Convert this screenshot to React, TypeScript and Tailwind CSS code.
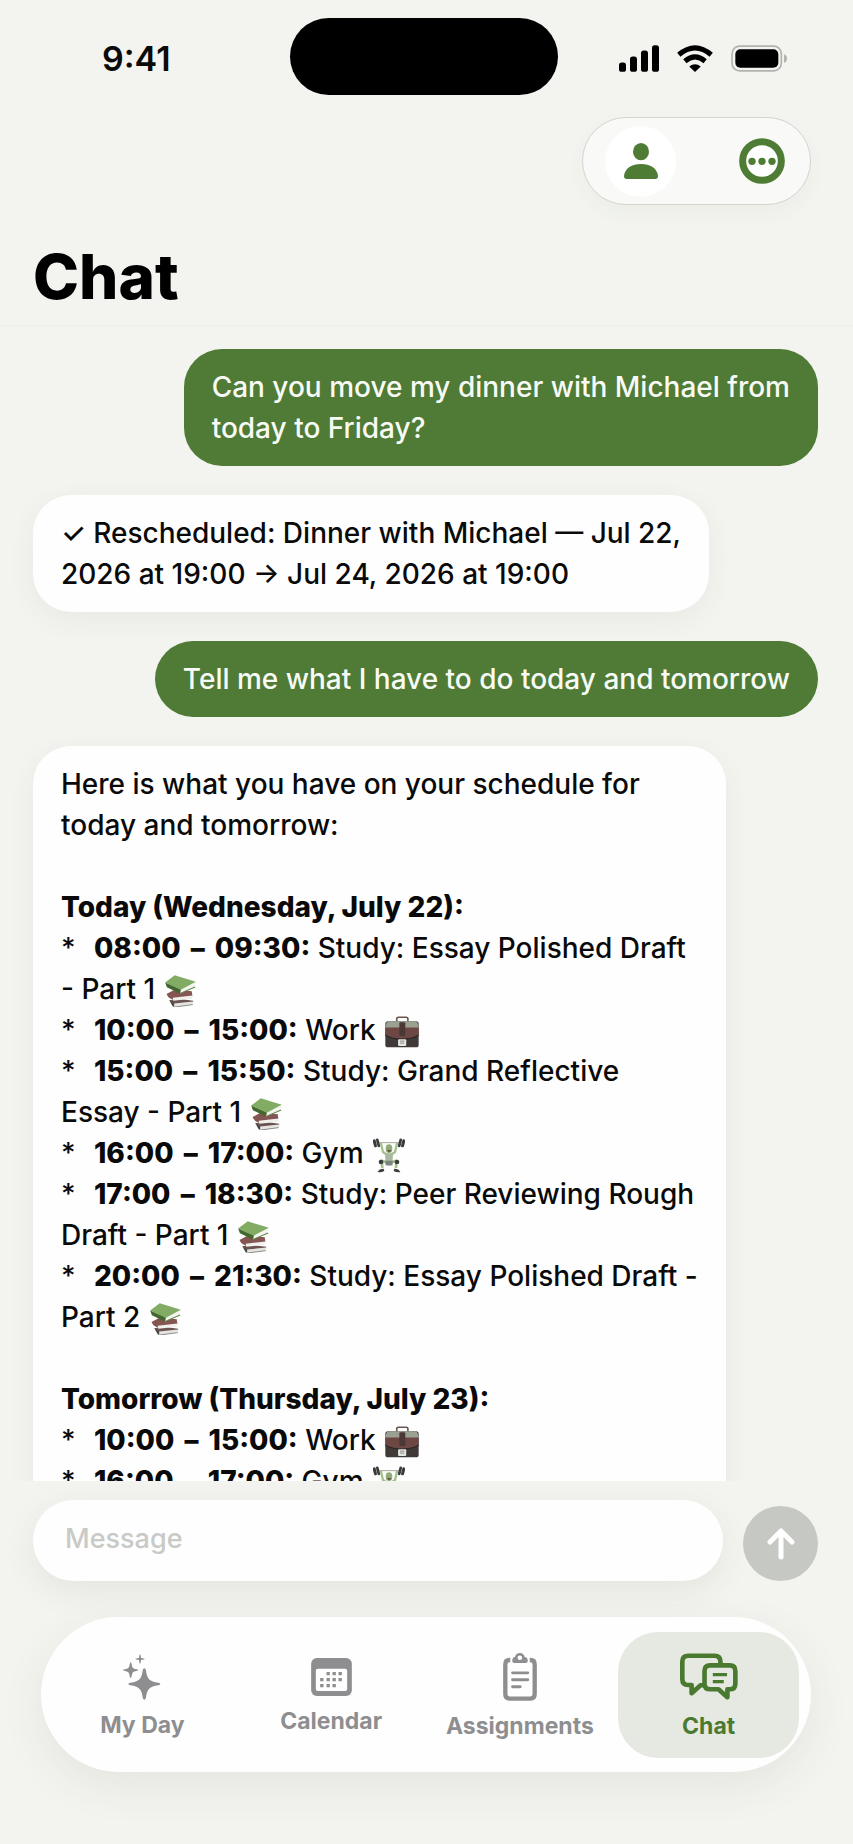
import React from "react";

const StatusBar = () => {
  return (
    <div className="grid grid-cols-[1fr_268px_1fr] items-center pt-[18px] pr-[5px]">
      <div className="pt-1 pl-[102px] text-[34px] leading-[40px] font-semibold">
        9:41
      </div>
      <div className="h-[77px] rounded-full bg-black"></div>
      <div className="flex items-center justify-end gap-[18px] pt-1 pr-[61px]">
        <svg className="h-[27px] w-10" viewBox="0 0 120 80">
          <rect x="0" y="52" width="21" height="28" rx="8" />
          <rect x="33" y="34" width="21" height="46" rx="8" />
          <rect x="66" y="16" width="21" height="64" rx="8" />
          <rect x="99" y="0" width="21" height="80" rx="8" />
        </svg>
        <svg className="h-[27px] w-9" viewBox="0 0 106 80">
          <g fill="none" stroke="#000" strokeWidth="15">
            <path d="M5 29 Q53 -12 101 29" />
            <path d="M23 48 Q53 23 83 48" />
          </g>
          <path d="M53 80 L36 64 Q53 50 70 64 Z" />
        </svg>
        <svg className="h-[27px] w-14" viewBox="0 0 168 80">
          <rect
            x="3"
            y="3"
            width="148"
            height="74"
            rx="23"
            fill="none"
            stroke="#b2b3b0"
            strokeWidth="5"
          />
          <rect x="13" y="12" width="129" height="56" rx="15" />
          <path d="M159 27 Q168 30 168 40 Q168 50 159 53 Z" fill="#b2b3b0" />
        </svg>
      </div>
    </div>
  );
};

const HeaderActions = () => {
  return (
    <div className="flex justify-end pt-[22px] pr-[42px]">
      <div className="flex h-[88px] w-[229px] items-center justify-between rounded-full border border-[#d3d4d0] bg-[#f9faf7] pr-[25px] pl-[22px] shadow-[0_8px_20px_rgba(60,70,50,0.04)]">
        <button
          aria-label="Profile"
          className="flex size-[71px] items-center justify-center rounded-full bg-white"
        >
          <svg className="h-9 w-[34px]" viewBox="0 0 102 108" fill="#4f7c35">
            <ellipse cx="51" cy="26" rx="24" ry="26" />
            <path d="M8 108 Q0 108 0 99 C2 76 24 63 51 63 C78 63 100 76 102 99 Q102 108 94 108 Z" />
          </svg>
        </button>
        <button aria-label="More">
          <svg className="size-[46px]" viewBox="0 0 138 138">
            <circle
              cx="69"
              cy="69"
              r="58"
              fill="#fff"
              stroke="#4f7c35"
              strokeWidth="21"
            />
            <g fill="#4f7c35">
              <circle cx="39" cy="70" r="11" />
              <circle cx="69" cy="70" r="11" />
              <circle cx="99" cy="70" r="11" />
            </g>
          </svg>
        </button>
      </div>
    </div>
  );
};

const Books = () => (
  <svg
    role="img"
    aria-label="books"
    className="ml-0.5 inline-block h-8 w-[31px] align-middle"
    viewBox="0 0 90 94"
  >
    <path d="M12 74 L40 70 L82 76 L82 80 L26 88 Z" fill="#6b5351" />
    <path d="M12 74 L26 84 L28 94 L22 92 Z" fill="#454844" />
    <path d="M26 84 L82 78 L80 87 L28 94 Z" fill="#e6e5e1" />
    <path d="M28 94 L81 87" stroke="#5a5c58" strokeWidth="2" />
    <path d="M4 56 L30 42 L78 48 L80 62 L22 72 Q8 68 4 56 Z" fill="#845552" />
    <path d="M22 67 L80 60 L78 70 L24 76 Z" fill="#f1f0ec" />
    <path d="M0 22 L5 36 L43 54 L46 42 Z" fill="#42672f" />
    <path d="M46 43 L90 22 L87 35 L44 54 Z" fill="#f4f4f0" />
    <path d="M44 54 L88 35" stroke="#5b8643" strokeWidth="3" />
    <path d="M0 22 L28 1 L90 20 L46 43 Z" fill="#82ac64" />
  </svg>
);

const Briefcase = () => (
  <svg
    role="img"
    aria-label="briefcase"
    className="ml-0.5 inline-block h-8 w-[34px] align-middle"
    viewBox="0 0 104 96"
  >
    <path
      d="M36 16 V7 Q36 3 41 3 H65 Q70 3 70 7 V16"
      fill="none"
      stroke="#66544f"
      strokeWidth="5"
    />
    <rect x="1" y="15" width="102" height="80" rx="8" fill="#3f3938" />
    <path d="M10 15 H94 Q101 16 103 36 H1 Q3 16 10 15 Z" fill="#9aa192" />
    <path d="M1 34 H103 V58 Q80 70 52 70 Q24 70 1 58 Z" fill="#6d4743" />
    <path
      d="M1 58 Q24 70 52 70 Q80 70 103 58"
      fill="none"
      stroke="#2c2828"
      strokeWidth="4"
    />
    <rect x="44" y="18" width="18" height="42" rx="3" fill="#4b3733" />
    <rect x="40" y="70" width="25" height="21" rx="3" fill="#e4e4e0" />
    <path d="M46 76 H59 M46 82 H59" stroke="#8b8b86" strokeWidth="3" />
  </svg>
);

const Lifter = () => (
  <svg
    role="img"
    aria-label="weight lifter"
    className="ml-0.5 inline-block h-[35px] w-8 align-middle"
    viewBox="0 0 96 105"
  >
    <path d="M10 14 H86" stroke="#a3a6a0" strokeWidth="3" />
    <g fill="#383b3a">
      <rect x="1" y="4" width="9" height="24" rx="4" transform="rotate(-14 5 16)" />
      <rect x="11" y="1" width="8" height="27" rx="4" transform="rotate(-14 15 14)" />
      <rect x="77" y="1" width="8" height="27" rx="4" transform="rotate(14 81 14)" />
      <rect x="86" y="4" width="9" height="24" rx="4" transform="rotate(14 91 16)" />
    </g>
    <path
      d="M24 17 L30 42 L42 50 M72 17 L66 42 L54 50"
      fill="none"
      stroke="#a5bf8e"
      strokeWidth="7"
      strokeLinecap="round"
    />
    <path
      d="M40 72 L26 68 L28 90 M57 72 L70 68 L69 90"
      fill="none"
      stroke="#a5bf8e"
      strokeWidth="8"
      strokeLinejoin="round"
    />
    <ellipse cx="48" cy="32" rx="10" ry="13" fill="#8fac76" />
    <path d="M44 36 H53 V41 H44 Z" fill="#5d4440" />
    <path d="M36 46 H60 L58 80 Q48 86 38 80 Z" fill="#a9b8a0" />
    <path d="M37 68 H60 L58 82 H38 Z" fill="#7c827d" />
    <g fill="#3b3e3c">
      <circle cx="24" cy="72" r="7" />
      <circle cx="72" cy="72" r="7" />
      <path d="M14 102 Q18 92 32 92 L34 99 Q24 104 14 102 Z" />
      <path d="M82 102 Q78 92 64 92 L62 99 Q72 104 82 102 Z" />
    </g>
  </svg>
);

const schedule = [
  {
    Day: "Today (Wednesday, July 22):",
    Items: [
      { Start: "08:00", End: "09:30:", Title: "Study: Essay Polished Draft\n- Part 1", Icon: Books },
      { Start: "10:00", End: "15:00:", Title: "Work", Icon: Briefcase },
      { Start: "15:00", End: "15:50:", Title: "Study: Grand Reflective\nEssay - Part 1", Icon: Books },
      { Start: "16:00", End: "17:00:", Title: "Gym", Icon: Lifter },
      { Start: "17:00", End: "18:30:", Title: "Study: Peer Reviewing Rough\nDraft - Part 1", Icon: Books },
      { Start: "20:00", End: "21:30:", Title: "Study: Essay Polished Draft -\nPart 2", Icon: Books },
    ],
  },
  {
    Day: "Tomorrow (Thursday, July 23):",
    Items: [
      { Start: "10:00", End: "15:00:", Title: "Work", Icon: Briefcase },
      { Start: "16:00", End: "17:00:", Title: "Gym", Icon: Lifter },
    ],
  },
];

const UserMessage = ({ children }: { children: React.ReactNode }) => (
  <div className="self-end rounded-[38px] bg-[#4f7b36] px-7 pt-[18px] pb-[17px] whitespace-pre-wrap text-[#f8faf5]">
    {children}
  </div>
);

const BotMessage = ({ children }: { children: React.ReactNode }) => (
  <div className="self-start rounded-[38px] bg-[#fefefe] px-7 pt-[18px] pb-[17px] whitespace-pre-wrap shadow-[0_8px_28px_rgba(60,70,50,0.06)]">
    {children}
  </div>
);

const Messages = () => {
  return (
    <main className="flex min-h-0 flex-1 flex-col gap-[29px] overflow-y-auto pt-[22px] pr-[35px] pl-[33px] text-[28px] leading-[41px] font-medium [scrollbar-width:none] *:shrink-0">
      <UserMessage>
        {"Can you move my dinner with Michael from\ntoday to Friday?"}
      </UserMessage>
      <BotMessage>
        {"✓ Rescheduled: Dinner with Michael — Jul 22,\n2026 at 19:00 → Jul 24, 2026 at 19:00"}
      </BotMessage>
      <UserMessage>Tell me what I have to do today and tomorrow</UserMessage>
      <BotMessage>
        <p>{"Here is what you have on your schedule for\ntoday and tomorrow:"}</p>
        {schedule.map((group, index) => (
          <div key={index} className="pt-[41px]">
            <h2 className="font-extrabold">{group.Day}</h2>
            {group.Items.map((item, itemIndex) => (
              <p key={itemIndex}>
                <span className="inline-block w-[33px]">*</span>
                <strong className="font-extrabold">
                  {item.Start} <span className="mx-1">–</span> {item.End}
                </strong>{" "}
                {item.Title} <item.Icon />
              </p>
            ))}
          </div>
        ))}
      </BotMessage>
    </main>
  );
};

const Composer = () => {
  return (
    <form
      className="flex items-end gap-5 pt-[19px] pr-[35px] pl-[33px]"
      onSubmit={(e) => e.preventDefault()}
    >
      <input
        type="text"
        aria-label="Message"
        placeholder="Message"
        className="h-[81px] min-w-0 flex-1 rounded-full bg-[#fefefe] px-8 pb-1 text-[27px] font-medium shadow-[0_10px_32px_rgba(60,70,50,0.08)] outline-none placeholder:text-[#c8cac5]"
      />
      <button
        aria-label="Send"
        className="flex size-[75px] items-center justify-center rounded-full bg-[#c6c8c3]"
      >
        <svg className="h-8 w-7" viewBox="0 0 28 32">
          <path
            d="M14 29 V4 M3 14 L14 3 L25 14"
            fill="none"
            stroke="#fff"
            strokeWidth="5"
            strokeLinecap="round"
            strokeLinejoin="round"
          />
        </svg>
      </button>
    </form>
  );
};

const SparklesIcon = () => (
  <svg className="h-[46px] w-[38px]" viewBox="0 0 114 138" fill="currentColor">
    <path d="M64 43 Q68 43 69 50 C72 74 80 83 106 86 Q112 87 112 90 Q112 93 106 94 C80 97 72 106 69 130 Q68 137 64 137 Q60 137 59 130 C56 106 48 97 22 94 Q16 93 16 90 Q16 87 22 86 C48 83 56 74 59 50 Q60 43 64 43 Z" />
    <path d="M23 25 Q25 25 26 31 C27 41 31 45 40 46 Q46 47 46 48 Q46 50 40 51 C31 52 27 56 26 66 Q25 72 23 72 Q21 72 20 66 C19 56 15 52 6 51 Q0 50 0 48 Q0 47 6 46 C15 45 19 41 20 31 Q21 25 23 25 Z" />
    <path d="M51 1 Q53 1 54 12 Q65 13 65 15 Q65 17 54 18 Q53 29 51 29 Q49 29 48 18 Q37 17 37 15 Q37 13 48 12 Q49 1 51 1 Z" />
  </svg>
);

const CalendarIcon = () => (
  <svg className="h-[38px] w-[41px]" viewBox="0 0 122 114" fill="currentColor">
    <rect width="122" height="114" rx="17" />
    <rect x="14" y="32" width="94" height="67" rx="6" fill="#fefefe" />
    <path
      d="M46 47 h10 M64 47 h10 M82 47 h10 M27 65 h10 M46 65 h10 M64 65 h10 M82 65 h10 M27 83 h10 M46 83 h10 M64 83 h10"
      stroke="currentColor"
      strokeWidth="10"
    />
  </svg>
);

const ClipboardIcon = () => (
  <svg className="h-12 w-[34px]" viewBox="0 0 103 145" fill="none">
    <path
      d="M22 21 H20 Q7 21 7 34 V125 Q7 138 20 138 H83 Q96 138 96 125 V34 Q96 21 83 21 H81"
      stroke="currentColor"
      strokeWidth="13"
    />
    <path
      d="M28 24 Q28 13 36 12 Q40 0 51 0 Q62 0 66 12 Q75 13 75 24 Q75 30 69 30 H34 Q28 30 28 24 Z"
      fill="currentColor"
    />
    <circle cx="51" cy="14" r="7" fill="#fefefe" />
    <path
      d="M29 60 H75 M29 81 H75 M29 102 H52"
      stroke="currentColor"
      strokeWidth="9"
      strokeLinecap="round"
    />
  </svg>
);

const ChatIcon = () => (
  <svg
    className="h-12 w-[58px]"
    viewBox="0 0 175 144"
    fill="none"
    stroke="currentColor"
    strokeWidth="14"
    strokeLinejoin="round"
  >
    <path d="M122 32 V26 Q122 8 104 8 H25 Q7 8 7 26 V78 Q7 96 24 96 H35 V121 L62 97 H70" />
    <path d="M91 37 H150 Q167 37 167 54 V92 Q167 109 150 109 H143 V133 L116 109 H91 Q74 109 74 92 V54 Q74 37 91 37 Z" />
    <path d="M99 65 H142 M99 86 H132" strokeWidth="10" />
  </svg>
);

const tabs = [
  { Name: "My Day", Icon: SparklesIcon, Active: false },
  { Name: "Calendar", Icon: CalendarIcon, Active: false },
  { Name: "Assignments", Icon: ClipboardIcon, Active: false },
  { Name: "Chat", Icon: ChatIcon, Active: true },
];

const TabBar = () => {
  return (
    <nav className="mt-9 mr-[42px] mb-[72px] ml-[41px] grid h-[155px] grid-cols-4 items-center rounded-full bg-[#fefefe] pr-2 pl-[7px] shadow-[0_14px_44px_rgba(60,70,50,0.08)]">
      {tabs.map((tab) => (
        <button
          key={tab.Name}
          className={`mx-1 flex h-[126px] flex-col items-center justify-center gap-[11px] rounded-[40px] pt-1 text-[23px] leading-7 font-bold ${
            tab.Active ? "bg-[#e6e9e2] text-[#4a7a30]" : "text-[#8e8e90]"
          }`}
        >
          <tab.Icon />
          {tab.Name}
        </button>
      ))}
    </nav>
  );
};

const App = () => {
  return (
    <div className="flex h-screen flex-col bg-[#f3f4ef] font-['Inter',sans-serif] text-[#0a0a0a]">
      <header className="border-b-2 border-[#eff0eb]">
        <StatusBar />
        <HeaderActions />
        <h1 className="px-[33px] pt-9 pb-3 text-[62px] leading-[72px] font-extrabold text-black">
          Chat
        </h1>
      </header>
      <Messages />
      <Composer />
      <TabBar />
    </div>
  );
};

export default App;
